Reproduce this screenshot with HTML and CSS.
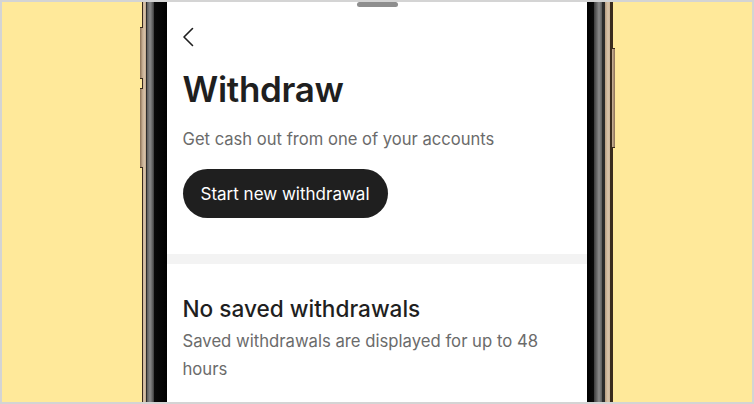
FILE: index.html
```html
<!DOCTYPE html>
<html>
<head>
<meta charset="utf-8">
<link rel="stylesheet" href="styles.css">
</head>
<body>
<div class="stage">
  <div class="phone">
    <span class="btn btn-l1"></span>
    <span class="btn btn-l2"></span>
    <span class="btn btn-r1"></span>
    <div class="screen">
      <span class="grabber"></span>
      <div class="top">
        <svg class="back" width="12" height="20" viewBox="0 0 12 20" aria-label="Back">
          <path d="M10.5 1.5 L2 10 L10.5 18.5" fill="none" stroke="#1f1f1f" stroke-width="1.6" stroke-linecap="round" stroke-linejoin="round"/>
        </svg>
        <h1 class="title">Withdraw</h1>
        <p class="subtitle">Get cash out from one of your accounts</p>
        <button class="primary">Start new withdrawal</button>
      </div>
      <div class="divider"></div>
      <div class="empty">
        <h2 class="empty-title">No saved withdrawals</h2>
        <p class="empty-text">Saved withdrawals are displayed for up to 48 hours</p>
      </div>
    </div>
  </div>
</div>
</body>
</html>
```

FILE: styles.css
```css
* { box-sizing: border-box; }
html, body { margin: 0; padding: 0; }
body { width: 754px; height: 404px; overflow: hidden; font-family: Inter, "Noto Sans", sans-serif; }

.stage {
  width: 754px;
  height: 404px;
  border: 2px solid #d4d4d4;
  background: #ffe99a;
  display: flex;
  justify-content: center;
  overflow: hidden;
}

.phone {
  position: relative;
  width: 471px;
  margin-top: -2px;
  height: 410px;
  padding: 0 26px 0 25px;
  background: linear-gradient(to right,
    #3a2b1c 0, #3a2b1c 1px,
    #cbb398 1px, #d9c4aa 3px, #b89d80 4px,
    #2b2b2b 4px, #2b2b2b 5px,
    #5a5a5a 5px, #8a8a8a 8px, #6a6a6a 10px, #3c3c3c 12px,
    #0a0a0a 12px, #000 25px,
    transparent 25px, transparent 445px,
    #000 445px, #0a0a0a 452px,
    #3c3c3c 452px, #6a6a6a 455px, #8a8a8a 457px, #5a5a5a 460px,
    #2b2b2b 460px, #2b2b2b 463px,
    #b89d80 463px, #d9c4aa 466px, #cbb398 468px,
    #3a2b1c 468px, #3a2b1c 471px);
}

.btn {
  position: absolute;
  width: 3px;
  background: linear-gradient(to right, #8a6f52, #cdb69c);
  border-top: 1px solid #3a2b1c;
  border-bottom: 1px solid #3a2b1c;
}
.btn-l1 { left: -2px; top: 27px; height: 52px; }
.btn-l2 { left: -2px; top: 88px; height: 80px; }
.btn-r1 { right: -2px; top: 48px; height: 100px; background: linear-gradient(to right, #cdb69c, #8a6f52); }

.screen {
  position: relative;
  height: 100%;
  background: #fff;
  display: flex;
  flex-direction: column;
}

.grabber {
  position: absolute;
  top: 2px;
  left: 50%;
  width: 41px;
  height: 5px;
  margin-left: -20px;
  border-radius: 3px;
  background: #8e8e8e;
}

.top {
  padding: 27px 16px 36px;
  display: flex;
  flex-direction: column;
  align-items: flex-start;
}

.back { display: block; margin-left: -1px; }

.title {
  margin: 20px 0 0;
  font-size: 35px;
  line-height: 44px;
  font-weight: 600;
  color: #1f1f1f;
  letter-spacing: -0.3px;
}

.subtitle {
  margin: 16px 0 0;
  font-size: 16.6px;
  line-height: 24px;
  color: #6b6b6b;
}

.primary {
  margin-top: 18px;
  height: 49px;
  padding: 0 18px;
  border: 0;
  border-radius: 25px;
  background: #1f1f1f;
  color: #fff;
  font-family: inherit;
  font-size: 17px;
}

.divider { height: 10px; background: #f3f3f3; }

.empty { padding: 30px 16px 0; }

.empty-title {
  margin: 0;
  font-size: 22.6px;
  line-height: 30px;
  font-weight: 500;
  color: #1f1f1f;
}

.empty-text {
  margin: 3px 0 0;
  font-size: 16.7px;
  line-height: 28px;
  color: #6b6b6b;
}
```
